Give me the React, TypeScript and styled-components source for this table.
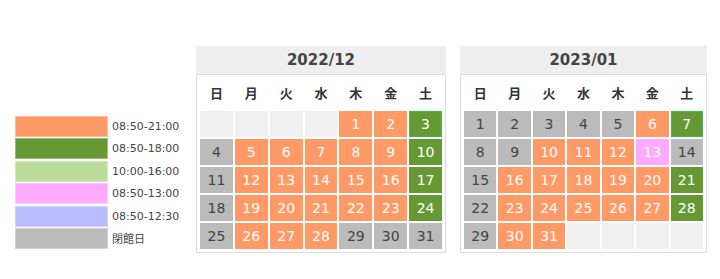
import React from "react";
import styled, { createGlobalStyle } from "styled-components";

const Global = createGlobalStyle`
  html, body { margin: 0; padding: 0; background: #fff; }
  body { font-family: "DejaVu Sans", Verdana, "Noto Sans CJK JP", sans-serif; color: #444; }
`;

type Kind = "o" | "g" | "lg" | "p" | "b" | "c" | "e";

const colors: Record<Kind, string> = {
  o: "#ff9966",
  g: "#669933",
  lg: "#bbdd99",
  p: "#ffaaff",
  b: "#bbbbff",
  c: "#bbbbbb",
  e: "#f0f0f0",
};

const Page = styled.div`
  display: flex;
  align-items: flex-start;
  padding: 46px 0 0 15px;
`;

const Legend = styled.div`
  display: flex;
  flex-direction: column;
  gap: 1.4px;
  margin-top: 70px;
  width: 181px;
`;

const LegendRow = styled.div`
  display: flex;
  align-items: center;
  gap: 4px;
  height: 21px;
`;

const Swatch = styled.div<{ $kind: Kind }>`
  width: 93px;
  height: 21px;
  box-sizing: border-box;
  background: ${(p) => colors[p.$kind]};
  border: 1px solid rgba(255, 255, 255, 0.35);
`;

const LegendLabel = styled.span`
  font-size: 11px;
  color: #444;
`;

const Calendars = styled.div`
  display: flex;
  gap: 14px;
`;

const Cal = styled.div<{ $w: number }>`
  width: ${(p) => p.$w}px;
`;

const Title = styled.div`
  height: 28px;
  background: #eeeeee;
  display: flex;
  align-items: center;
  justify-content: center;
  font-size: 15px;
  font-weight: bold;
  color: #444;
`;

const Body = styled.div`
  border: 1px solid #dddddd;
  box-shadow: 0 1px 1px #eeeeee;
  background: #fff;
  padding: 0 3px 3px;
`;

const Grid = styled.div`
  display: grid;
  grid-template-columns: repeat(7, 1fr);
  column-gap: 2px;
  row-gap: 2px;
`;

const Dow = styled.div`
  height: 34px;
  display: flex;
  align-items: center;
  justify-content: center;
  font-size: 13px;
  font-weight: bold;
  color: #333;
  margin-bottom: 0;
`;

const Day = styled.div<{ $kind: Kind; $mark?: boolean }>`
  height: 26px;
  display: flex;
  align-items: center;
  justify-content: center;
  font-size: 14px;
  background: ${(p) => colors[p.$kind]};
  color: ${(p) => (p.$kind === "c" ? "#444" : "#fff")};
  box-shadow: ${(p) => (p.$mark ? "inset 0 0 0 1px #2fbf55" : "none")};
`;

const dows = ["日", "月", "火", "水", "木", "金", "土"];

type Cell = { d?: number; k: Kind; m?: boolean };

const build = (spec: string): Cell[] => {
  // spec tokens: "-" empty, "n:k" or "n:k!" marked
  return spec.split(" ").map((t) => {
    if (t === "-") return { k: "e" as Kind };
    const mark = t.endsWith("!");
    const [n, k] = t.replace("!", "").split(":");
    return { d: Number(n), k: k as Kind, m: mark };
  });
};

const dec = build(
  "- - - - 1:o 2:o 3:g! " +
    "4:c 5:o 6:o 7:o 8:o 9:o 10:g " +
    "11:c 12:o 13:o 14:o 15:o 16:o 17:g " +
    "18:c 19:o 20:o 21:o 22:o 23:o 24:g " +
    "25:c 26:o 27:o 28:o 29:c 30:c 31:c"
);

const jan = build(
  "1:c 2:c 3:c 4:c 5:c 6:o 7:g! " +
    "8:c 9:c 10:o 11:o 12:o 13:p 14:c " +
    "15:c 16:o 17:o 18:o 19:o 20:o 21:g " +
    "22:c 23:o 24:o 25:o 26:o 27:o 28:g " +
    "29:c 30:o 31:o - - - -"
);

const legend: { k: Kind; label: string }[] = [
  { k: "o", label: "08:50-21:00" },
  { k: "g", label: "08:50-18:00" },
  { k: "lg", label: "10:00-16:00" },
  { k: "p", label: "08:50-13:00" },
  { k: "b", label: "08:50-12:30" },
  { k: "c", label: "閉館日" },
];

const Calendar = ({ title, cells, w }: { title: string; cells: Cell[]; w: number }) => (
  <Cal $w={w}>
    <Title>{title}</Title>
    <Body>
      <Grid>
        {dows.map((d) => (
          <Dow key={d}>{d}</Dow>
        ))}
        {cells.map((c, i) => (
          <Day key={i} $kind={c.k} $mark={c.m}>
            {c.d ?? ""}
          </Day>
        ))}
      </Grid>
    </Body>
  </Cal>
);

export default function App() {
  return (
    <>
      <Global />
      <Page>
        <Legend>
          {legend.map((l) => (
            <LegendRow key={l.label}>
              <Swatch $kind={l.k} />
              <LegendLabel>{l.label}</LegendLabel>
            </LegendRow>
          ))}
        </Legend>
        <Calendars>
          <Calendar title="2022/12" cells={dec} w={250} />
          <Calendar title="2023/01" cells={jan} w={247} />
        </Calendars>
      </Page>
    </>
  );
}
